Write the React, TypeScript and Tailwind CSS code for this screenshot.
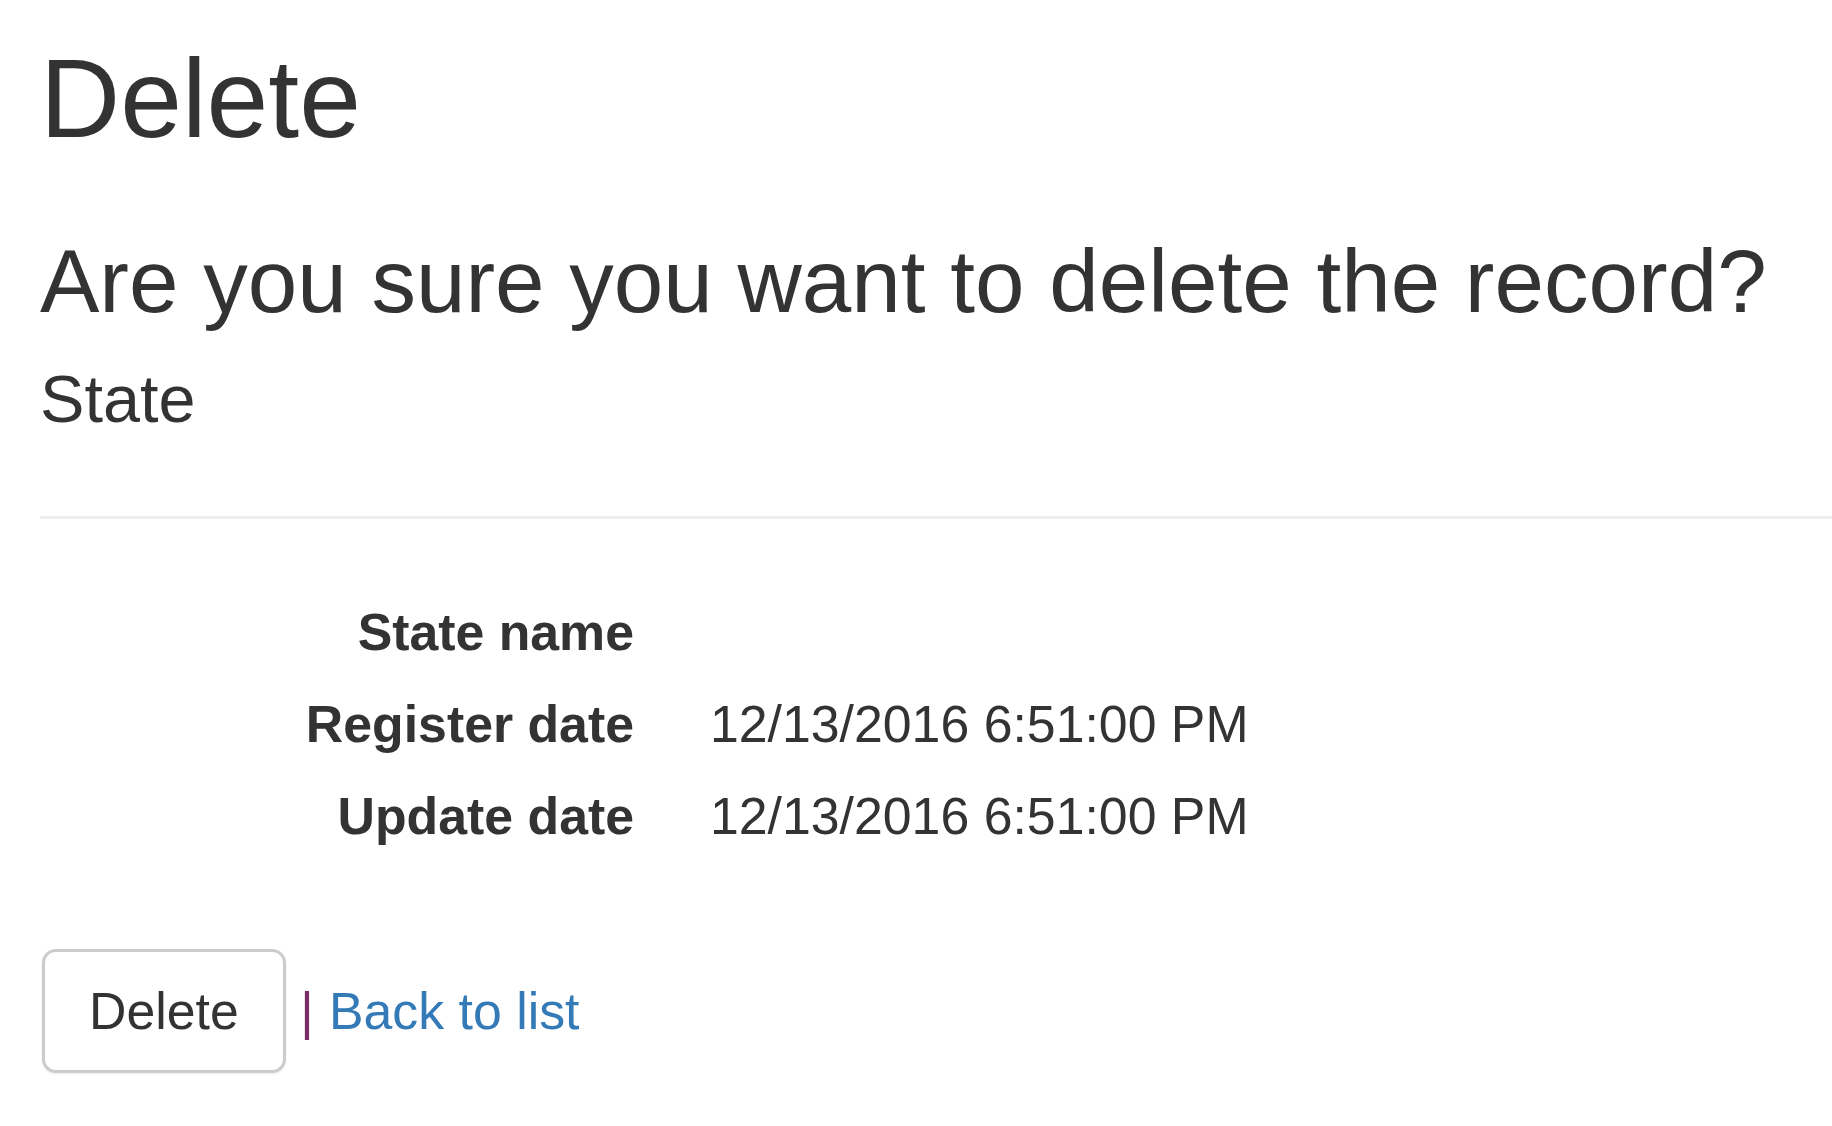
import React from "react";

// Scaffolded "Delete" confirmation page, rendered at a large zoom
const fields: { label: string; value: string }[] = [
  { label: "State name", value: "" },
  { label: "Register date", value: "12/13/2016 6:51:00 PM" },
  { label: "Update date", value: "12/13/2016 6:51:00 PM" },
];

export default function App() {
  return (
    <div className="min-h-screen bg-white pl-[40px] pt-[38px] text-[#333333] font-['Liberation_Sans',Arial,sans-serif]">
      <h2 className="text-[111px] leading-[122px] font-normal">Delete</h2>

      <h3 className="mt-[72px] text-[89px] leading-[98px] font-normal">
        Are you sure you want to delete the record?
      </h3>

      <div>
        <h4 className="mt-[33px] text-[66.6px] leading-[73px] font-normal">State</h4>
        <div className="mt-[80px] h-[3px] bg-[#eeeeee]" />

        {/* Details list */}
        <dl className="mt-[67px] grid grid-cols-[594px_1fr] gap-x-[76px] text-[51.8px] leading-[92px]">
          {fields.map((f) => (
            <React.Fragment key={f.label}>
              <dt className="text-right font-bold whitespace-nowrap">{f.label}</dt>
              <dd className="min-h-[92px]">{f.value}</dd>
            </React.Fragment>
          ))}
        </dl>
      </div>

      {/* Actions */}
      <div className="mt-[87px] text-[51.8px] leading-[74px] whitespace-nowrap">
        <button
          type="button"
          className="ml-[2px] inline-block rounded-[14px] border-[3px] border-[#cccccc] bg-white px-[44px] py-[22px] leading-[74px] text-[#333333] shadow-[0_1px_2px_rgba(0,0,0,0.08)]"
        >
          Delete
        </button>{" "}
        <span className="text-[#7b2d63]">|</span>{" "}
        <a href="#" className="ml-[1px] text-[#337ab7]">
          Back to list
        </a>
      </div>
    </div>
  );
}
